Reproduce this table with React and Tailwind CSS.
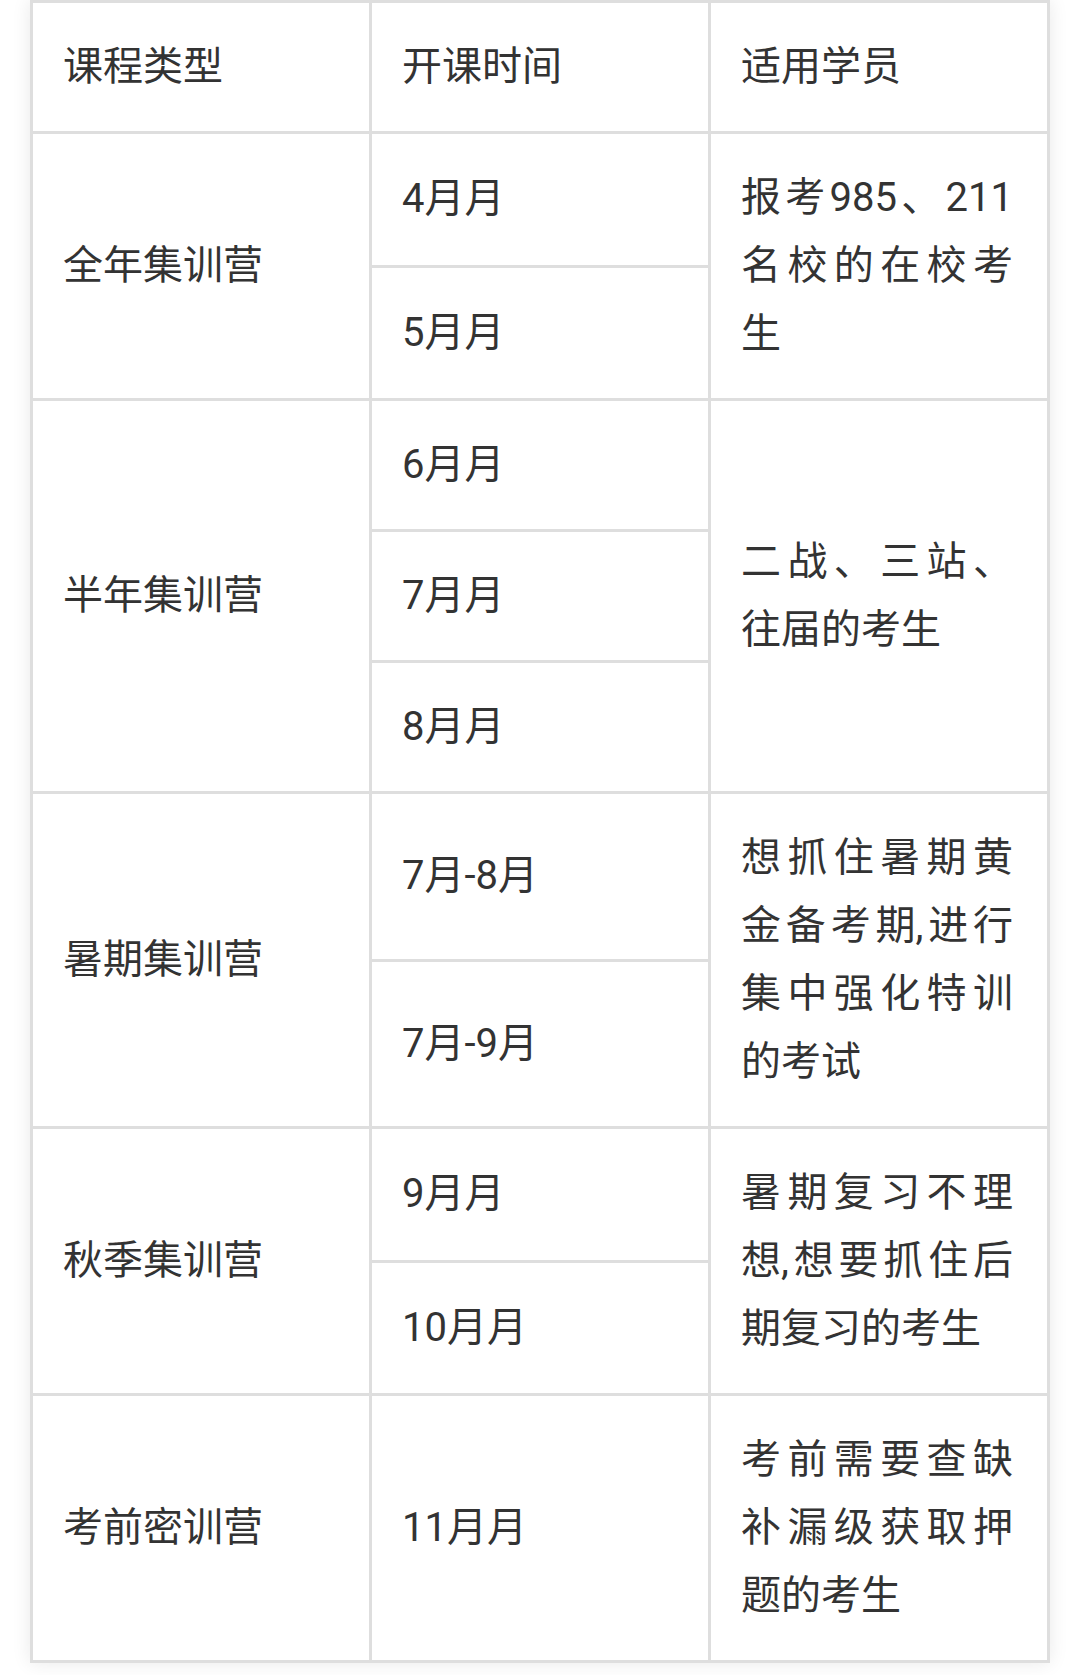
import React from 'react';

// 适用学员 column: lines are justified character by character, last line left-aligned
const rows = [
  {
    type: '全年集训营',
    times: ['4月月', '5月月'],
    who: [['报', '考', '985', '、', '211'], ['名', '校', '的', '在', '校', '考']],
    last: '生',
  },
  {
    type: '半年集训营',
    times: ['6月月', '7月月', '8月月'],
    who: [['二', '战', '、', '三', '站', '、']],
    last: '往届的考生',
  },
  {
    type: '暑期集训营',
    times: ['7月-8月', '7月-9月'],
    who: [
      ['想', '抓', '住', '暑', '期', '黄'],
      ['金', '备', '考', '期,', '进', '行'],
      ['集', '中', '强', '化', '特', '训'],
    ],
    last: '的考试',
  },
  {
    type: '秋季集训营',
    times: ['9月月', '10月月'],
    who: [
      ['暑', '期', '复', '习', '不', '理'],
      ['想,', '想', '要', '抓', '住', '后'],
    ],
    last: '期复习的考生',
  },
  {
    type: '考前密训营',
    times: ['11月月'],
    who: [
      ['考', '前', '需', '要', '查', '缺'],
      ['补', '漏', '级', '获', '取', '押'],
    ],
    last: '题的考生',
  },
];

const cell =
  'border-[3px] border-[#dedede] pl-[30px] pr-[34px] py-[30px] align-middle text-left font-normal';

function Justified({ lines, last }) {
  return (
    <div>
      {lines.map((parts, i) => (
        <div key={i} className="flex justify-between whitespace-nowrap">
          {parts.map((p, j) => (
            <span key={j}>{p}</span>
          ))}
        </div>
      ))}
      <div>{last}</div>
    </div>
  );
}

export default function App() {
  return (
    <div
      className="w-full h-[1675px] bg-white pl-[30px] text-[40px] leading-[68px] text-[#333]"
      style={{ fontFamily: '"Roboto", "Noto Sans CJK SC", sans-serif' }}
    >
      <table className="table-fixed w-[1017px] border-collapse bg-white shadow-[0_0_18px_rgba(0,0,0,0.09)]">
        <colgroup>
          <col className="w-[339px]" />
          <col className="w-[339px]" />
          <col className="w-[339px]" />
        </colgroup>
        <thead>
          <tr>
            <th className={cell}>课程类型</th>
            <th className={cell}>开课时间</th>
            <th className={cell}>适用学员</th>
          </tr>
        </thead>
        <tbody>
          {rows.map((r) =>
            r.times.map((t, i) => (
              <tr key={r.type + t}>
                {i === 0 && (
                  <td rowSpan={r.times.length} className={cell}>
                    {r.type}
                  </td>
                )}
                <td className={cell}>{t}</td>
                {i === 0 && (
                  <td rowSpan={r.times.length} className={cell}>
                    <Justified lines={r.who} last={r.last} />
                  </td>
                )}
              </tr>
            ))
          )}
        </tbody>
      </table>
    </div>
  );
}
